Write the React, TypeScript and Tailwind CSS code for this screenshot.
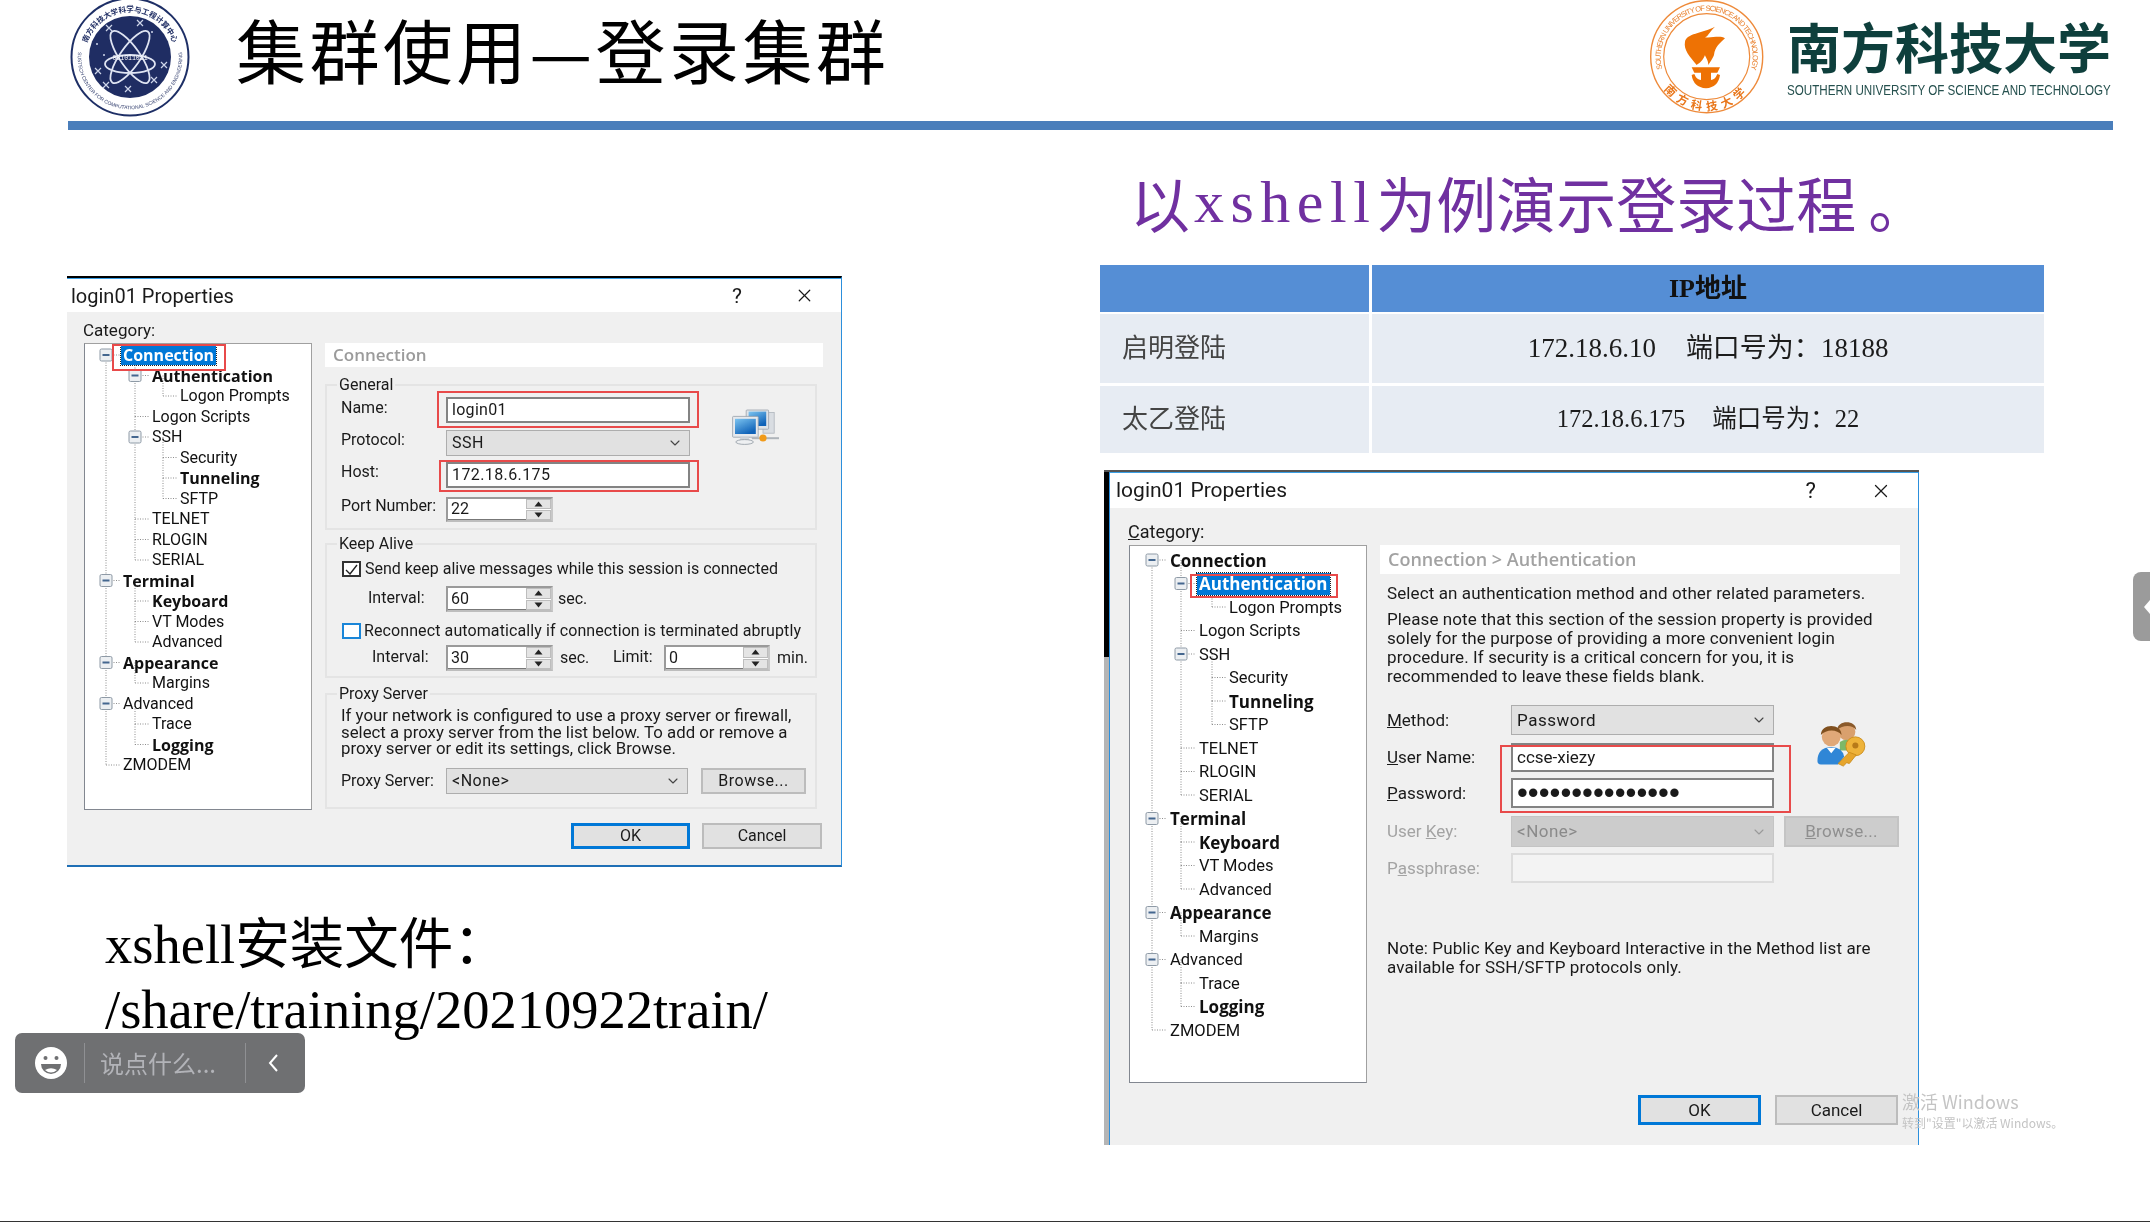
import React from "react";
import { ChevronDown, X } from "lucide-react";

type Node = { t: string; l: number; b?: boolean; e?: boolean };
const NODES: Node[] = [
  { t: "Connection", l: 0, b: true, e: true },
  { t: "Authentication", l: 1, b: true, e: true },
  { t: "Logon Prompts", l: 2 },
  { t: "Logon Scripts", l: 1 },
  { t: "SSH", l: 1, e: true },
  { t: "Security", l: 2 },
  { t: "Tunneling", l: 2, b: true },
  { t: "SFTP", l: 2 },
  { t: "TELNET", l: 1 },
  { t: "RLOGIN", l: 1 },
  { t: "SERIAL", l: 1 },
  { t: "Terminal", l: 0, b: true, e: true },
  { t: "Keyboard", l: 1, b: true },
  { t: "VT Modes", l: 1 },
  { t: "Advanced", l: 1 },
  { t: "Appearance", l: 0, b: true, e: true },
  { t: "Margins", l: 1 },
  { t: "Advanced", l: 0, e: true },
  { t: "Trace", l: 1 },
  { t: "Logging", l: 1, b: true },
  { t: "ZMODEM", l: 0 },
];

type TreeMetrics = { xs: number[]; text: number[]; row: number; top: number };

function Tree({
  m,
  selected,
  selClass,
  redClass,
  boxClass,
  boldClass,
}: {
  m: TreeMetrics;
  selected: number;
  selClass: string;
  redClass: string;
  boxClass: string;
  boldClass: string;
}) {
  const cy = (i: number) => m.top + m.row * i + m.row / 2;
  const segs: { x1: number; y1: number; x2: number; y2: number }[] = [];
  NODES.forEach((n, i) => {
    const y = cy(i);
    const gx = m.xs[n.l];
    segs.push({ x1: gx, y1: y, x2: m.text[n.l] - 3, y2: y });
    if (i > 0) {
      let j = i - 1;
      while (j >= 0 && NODES[j].l > n.l) j--;
      if (j >= 0) segs.push({ x1: gx, y1: cy(j), x2: gx, y2: y });
    }
  });
  return (
    <div className={`relative bg-white border border-[#a0a0a0] border-l-[#828790] border-b-[#828790] ${boxClass}`}>
      <svg className="absolute inset-0 w-full h-full">
        {segs.map((s, i) => (
          <line key={i} {...s} stroke="#8d8d8d" strokeWidth="1" strokeDasharray="1 1.5" />
        ))}
        {NODES.map((n, i) =>
          n.e ? (
            <g key={i} transform={`translate(${m.xs[n.l] - 6.5},${cy(i) - 6.5})`}>
              <rect x="0.5" y="0.5" width="12" height="12" rx="1.5" fill="#eceff2" stroke="#8e9aa6" />
              <rect x="3" y="5.5" width="7" height="2" fill="#44678f" />
            </g>
          ) : null
        )}
      </svg>
      <div className="relative" style={{ paddingTop: m.top }}>
        {NODES.map((n, i) => {
          const sel = i === selected;
          return (
            <div
              key={i}
              className={`flex items-center whitespace-nowrap text-[#111] ${n.b ? boldClass : ""}`}
              style={{ height: m.row, paddingLeft: m.text[n.l] }}
            >
              {sel ? (
                <span className={`relative -ml-[2px] flex items-center px-[2px] bg-[#0078d7] text-white outline-1 outline-dotted outline-[#222] ${selClass}`}>
                  {n.t}
                  <span className={`absolute border-2 border-[#e84a4a] ${redClass}`} />
                </span>
              ) : (
                n.t
              )}
            </div>
          );
        })}
      </div>
    </div>
  );
}

const Chevron = ({ dim }: { dim?: boolean }) => (
  <ChevronDown size={16} strokeWidth={1.6} className={dim ? "text-[#999]" : "text-[#444]"} />
);

const Input = ({ className = "", children }: { className?: string; children?: React.ReactNode }) => (
  <div className={`flex items-center bg-white border-2 border-[#838383] pl-[4px] overflow-hidden ${className}`}>{children}</div>
);

const Combo = ({ className = "", children, dim }: { className?: string; children: React.ReactNode; dim?: boolean }) => (
  <div
    className={`flex items-center justify-between border pl-[5px] pr-[6px] ${
      dim ? "bg-[#cccccc] border-[#c4c4c4] text-[#8a8a8a]" : "bg-[#e1e1e1] border-[#adadad]"
    } ${className}`}
  >
    <span className="tracking-[0.5px]">{children}</span>
    <Chevron dim={dim} />
  </div>
);

const Spin = ({ className = "", value }: { className?: string; value: string }) => (
  <div className={`flex border-2 border-[#9a9a9a] border-r-[#c8c8c8] border-b-[#bdbdbd] bg-white ${className}`}>
    <div className="flex-1 flex items-center pl-[3px] border-b border-[#777]">{value}</div>
    <div className="w-[25px] flex flex-col gap-[1px] bg-white">
      {[0, 1].map((i) => (
        <div key={i} className="flex-1 flex items-center justify-center bg-[#e4e4e4] border border-[#bdbdbd]">
          <svg width="9" height="6" viewBox="0 0 9 6">
            <path d={i === 0 ? "M4.5 0.5 L8.5 5.5 H0.5 Z" : "M4.5 5.5 L8.5 0.5 H0.5 Z"} fill="#222" />
          </svg>
        </div>
      ))}
    </div>
  </div>
);

const Btn = ({ className = "", children, primary }: { className?: string; children: React.ReactNode; primary?: boolean }) => (
  <div
    className={`flex items-center justify-center bg-[#e1e1e1] ${
      primary ? "border-[3px] border-[#0078d7]" : "border-2 border-[#bcbcbc]"
    } ${className}`}
  >
    {children}
  </div>
);

const Group = ({ title, className = "", children }: { title: string; className?: string; children: React.ReactNode }) => (
  <div className={`relative border-2 border-[#e4e4e4] ${className}`}>
    <span className="absolute left-[10px] -top-[11px] bg-[#f0f0f0] px-[2px] leading-[20px]">{title}</span>
    {children}
  </div>
);

const NetIcon = () => (
  <svg width="48" height="42" viewBox="0 0 60 50" className="shrink-0">
    <defs>
      <linearGradient id="mon" x1="0" y1="0" x2="0.6" y2="1">
        <stop offset="0" stopColor="#7cc4f0" />
        <stop offset="1" stopColor="#0f62b8" />
      </linearGradient>
    </defs>
    <rect x="40" y="8" width="14" height="26" fill="#d9dde2" stroke="#b0b6bd" />
    <rect x="19" y="5" width="28" height="24" rx="1" fill="#dfe3e8" stroke="#9aa2ab" />
    <rect x="22" y="7" width="22" height="18" fill="url(#mon)" />
    <rect x="2" y="13" width="32" height="26" rx="1" fill="#e6e9ed" stroke="#97a0aa" />
    <rect x="5" y="16" width="26" height="19" fill="url(#mon)" />
    <path d="M12 39 h10 l2 6 h-14 z" fill="#cfd4da" />
    <ellipse cx="17" cy="45" rx="11" ry="3" fill="#eef0f2" stroke="#8f98a1" />
    <rect x="26" y="39" width="34" height="2.5" fill="#aeb4ba" />
    <circle cx="40" cy="40" r="4.5" fill="#f19b1a" />
  </svg>
);

const UserKeyIcon = () => (
  <svg width="56" height="52" viewBox="0 0 65 60" className="shrink-0">
    <circle cx="38" cy="18" r="10" fill="#d9a06d" />
    <path d="M27 16 C27 4 49 4 49 16 C45 10 33 10 27 16 Z" fill="#8a5a2b" />
    <path d="M30 30 Q38 25 46 30 L46 40 L30 40 Z" fill="#7cb868" />
    <circle cx="20" cy="24" r="11" fill="#e0a878" />
    <path d="M8 22 C8 8 32 8 32 22 C27 15 14 15 8 22 Z" fill="#80501f" />
    <path d="M4 52 Q4 36 20 36 Q33 36 35 47 L28 56 L8 56 Q4 56 4 52 Z" fill="#2f86d6" />
    <path d="M15 37 L20 43 L25 37 Z" fill="#ffffff" />
    <circle cx="48" cy="35" r="11" fill="#eeb33a" stroke="#c98a19" />
    <circle cx="48" cy="34" r="3.5" fill="#b77a19" />
    <path d="M41 42 L28 55 L34 58 L38 54 L41 55 L49 45 Z" fill="#e6a52c" stroke="#c98a19" />
  </svg>
);

const Dialog1 = () => (
  <div className="w-[775px] h-[591px] border-t-2 border-t-black border-r border-r-[#2c8fdc] border-b-2 border-b-[#1f6fb5] bg-[#f0f0f0] text-[#1a1a1a] font-['Roboto','Noto_Sans',sans-serif] text-[16px] leading-[20px]">
    <div className="h-[34px] flex items-center bg-white border-t border-[#3aa0e6] pl-[4px] pr-[26px] text-[20px]">
      <span>login01 Properties</span>
      <span className="ml-auto text-[21px] mr-[52px]">?</span>
      <X size={21} strokeWidth={1.4} />
    </div>
    <div className="pl-[17px]">
      <div className="h-[31px] flex items-end pb-[3px] -ml-[1px] text-[17px]">Category:</div>
      <div className="flex gap-[13px]">
        <Tree
          m={{ xs: [21, 50, 78], text: [38, 67, 95], row: 20.5, top: 0.75 }}
          selected={0}
          selClass="h-[19px]"
          redClass="-left-[9px] -right-[10px] -top-[2px] -bottom-[6px]"
          boxClass="w-[228px] h-[467px] shrink-0"
          boldClass="font-['Open_Sans',sans-serif] font-bold text-[16px]"
        />
        <div className="w-[498px]">
          <div className="h-[24px] bg-white flex items-center pl-[8px] text-[#9b9b9b] font-['Open_Sans',sans-serif] font-semibold text-[17px]">Connection</div>
          <Group title="General" className="mt-[17px] w-[492px] h-[146px]">
            <div className="flex">
              <div className="pt-[11px] pl-[14px]">
                <div className="relative flex items-center h-[26px]">
                  <span className="w-[105px] -mt-[4px]">Name:</span>
                  <Input className="w-[244px] h-[26px] tracking-[0.3px]">login01</Input>
                  <span className="absolute left-[96px] -right-[9px] -top-[6px] -bottom-[5px] border-2 border-[#e84a4a]" />
                </div>
                <div className="flex items-center mt-[7px] h-[26px]">
                  <span className="w-[105px] -mt-[6px]">Protocol:</span>
                  <Combo className="w-[244px] h-[26px]">SSH</Combo>
                </div>
                <div className="relative flex items-center mt-[6px] h-[26px]">
                  <span className="w-[105px] -mt-[6px]">Host:</span>
                  <Input className="w-[244px] h-[26px] tracking-[0.4px]">172.18.6.175</Input>
                  <span className="absolute left-[98px] -right-[9px] -top-[2px] -bottom-[4px] border-2 border-[#e84a4a]" />
                </div>
                <div className="flex items-center mt-[9px] h-[25px]">
                  <span className="w-[105px] -mt-[7px] whitespace-nowrap">Port Number:</span>
                  <Spin className="w-[107px] h-[25px]" value="22" />
                </div>
              </div>
              <div className="ml-[41px] mt-[19px]">
                <NetIcon />
              </div>
            </div>
          </Group>
          <Group title="Keep Alive" className="mt-[13px] w-[492px] h-[135px]">
            <div className="flex items-center mt-[16px] pl-[15px] h-[16px]">
              <span className="w-[19px] h-[16px] flex items-center justify-center border-2 border-[#333] bg-white">
                <svg width="13" height="11" viewBox="0 0 13 11">
                  <path d="M1 6 L5 10 L12 1" fill="none" stroke="#222" strokeWidth="1.4" />
                </svg>
              </span>
              <span className="ml-[4px] whitespace-nowrap">Send keep alive messages while this session is connected</span>
            </div>
            <div className="flex items-center mt-[9px] pl-[41px] h-[26px]">
              <span className="w-[78px] -mt-[2px]">Interval:</span>
              <Spin className="w-[107px] h-[26px]" value="60" />
              <span className="ml-[5px]">sec.</span>
            </div>
            <div className="flex items-center mt-[11px] pl-[15px] h-[16px]">
              <span className="w-[19px] h-[16px] border-2 border-[#1a86d8] bg-white" />
              <span className="ml-[3px] whitespace-nowrap tracking-[0.1px]">Reconnect automatically if connection is terminated abruptly</span>
            </div>
            <div className="flex items-center mt-[6px] pl-[45px] h-[26px]">
              <span className="w-[74px] -mt-[2px]">Interval:</span>
              <Spin className="w-[107px] h-[26px]" value="30" />
              <span className="ml-[7px] w-[53px]">sec.</span>
              <span className="w-[51px] -mt-[2px]">Limit:</span>
              <Spin className="w-[106px] h-[26px]" value="0" />
              <span className="ml-[7px]">min.</span>
            </div>
          </Group>
          <Group title="Proxy Server" className="mt-[15px] w-[492px] h-[116px]">
            <p className="pt-[12px] pl-[14px] text-[16.8px] leading-[16.7px] whitespace-nowrap">
              If your network is configured to use a proxy server or firewall,
              <br />
              select a proxy server from the list below. To add or remove a
              <br />
              proxy server or edit its settings, click Browse.
            </p>
            <div className="flex items-center mt-[11px] pl-[14px]">
              <span className="w-[105px] whitespace-nowrap">Proxy Server:</span>
              <Combo className="w-[242px] h-[26px]">{"<None>"}</Combo>
              <Btn className="ml-[13px] w-[105px] h-[26px] tracking-[0.5px]">Browse...</Btn>
            </div>
          </Group>
          <div className="flex gap-[12px] mt-[14px] ml-[246px]">
            <Btn primary className="w-[119px] h-[26px]">OK</Btn>
            <Btn className="w-[120px] h-[26px]">Cancel</Btn>
          </div>
        </div>
      </div>
    </div>
  </div>
);

const Dim = ({ children }: { children: React.ReactNode }) => <span className="w-[124px] text-[#a3a3a3]">{children}</span>;

const Dialog2 = () => (
  <div className="flex w-[815px] h-[675px] border-t-2 border-t-[#555]">
    <div className="w-[5px] shrink-0 flex flex-col">
      <div className="h-[185px] bg-black" />
      <div className="flex-1 bg-[#b5b5b5]" />
    </div>
    <div className="flex-1 border-x border-[#2c8fdc] bg-[#f0f0f0] text-[#1a1a1a] font-['Roboto','Noto_Sans',sans-serif] text-[17px] leading-[19px]">
      <div className="h-[36px] flex items-center bg-white border-t border-[#3aa0e6] pl-[6px] pr-[26px] text-[21px]">
        <span>login01 Properties</span>
        <span className="ml-auto text-[22px] mr-[54px]">?</span>
        <X size={22} strokeWidth={1.4} />
      </div>
      <div className="pl-[19px]">
        <div className="h-[37px] flex items-end pb-[4px] -ml-[1px] text-[18px]">
          <span><u>C</u>ategory:</span>
        </div>
        <div className="flex gap-[13px]">
          <Tree
            m={{ xs: [22, 51, 82], text: [40, 69, 99], row: 23.5, top: 2.25 }}
            selected={1}
            selClass="h-[22px]"
            redClass="-left-[7px] -right-[8px] top-[1px] -bottom-[3px]"
            boxClass="w-[238px] h-[538px] shrink-0 text-[16.5px]"
            boldClass="font-['Open_Sans',sans-serif] font-bold text-[17px]"
          />
          <div className="w-[520px]">
            <div className="h-[29px] bg-white flex items-center pl-[8px] text-[#a2a2a2] font-['Open_Sans',sans-serif] font-semibold text-[18px]">Connection &gt; Authentication</div>
            <div className="pl-[7px]">
              <p className="mt-[10px] whitespace-nowrap tracking-[0.1px]">Select an authentication method and other related parameters.</p>
              <p className="mt-[7px] whitespace-nowrap tracking-[0.1px]">
                Please note that this section of the session property is provided
                <br />
                solely for the purpose of providing a more convenient login
                <br />
                procedure. If security is a critical concern for you, it is
                <br />
                recommended to leave these fields blank.
              </p>
              <div className="flex mt-[19px]">
                <div>
                  <div className="flex items-center h-[30px]">
                    <span className="w-[124px]"><u>M</u>ethod:</span>
                    <Combo className="w-[263px] h-[30px]">Password</Combo>
                  </div>
                  <div className="relative flex items-center h-[29px] mt-[8px]">
                    <span className="w-[124px]"><u>U</u>ser Name:</span>
                    <Input className="w-[263px] h-[29px]">ccse-xiezy</Input>
                    <span className="absolute left-[113px] -right-[17px] top-[2px] h-[68px] border-2 border-[#e84a4a]" />
                  </div>
                  <div className="flex items-center h-[30px] mt-[6px]">
                    <span className="w-[124px]"><u>P</u>assword:</span>
                    <Input className="w-[263px] h-[30px] font-['Liberation_Sans'] text-[31px] leading-none">
                      <span className="-mt-[1px]">•••••••••••••••</span>
                    </Input>
                  </div>
                </div>
                <div className="ml-[40px] mt-[11px]">
                  <UserKeyIcon />
                </div>
              </div>
              <div className="flex items-center mt-[8px] h-[31px]">
                <Dim>User <u>K</u>ey:</Dim>
                <Combo dim className="w-[263px] h-[31px]">{"<None>"}</Combo>
                <Btn className="ml-[10px] w-[115px] h-[31px] !bg-[#cdcdcd] !border-[#c4c4c4] text-[#8f8f8f] tracking-[0.3px]"><span><u>B</u>rowse...</span></Btn>
              </div>
              <div className="flex items-center mt-[6px] h-[30px]">
                <Dim>P<u>a</u>ssphrase:</Dim>
                <div className="w-[263px] h-[30px] border-2 border-[#dcdcdc] bg-[#f3f3f3]" />
              </div>
              <p className="mt-[56px] whitespace-nowrap tracking-[0.1px]">
                Note: Public Key and Keyboard Interactive in the Method list are
                <br />
                available for SSH/SFTP protocols only.
              </p>
            </div>
            <div className="flex gap-[14px] mt-[118px] ml-[258px]">
              <Btn primary className="w-[123px] h-[30px]">OK</Btn>
              <Btn className="w-[123px] h-[30px]">Cancel</Btn>
            </div>
          </div>
        </div>
      </div>
    </div>
  </div>
);

const CSELogo = () => (
  <svg width="120" height="120" viewBox="0 0 120 120" className="shrink-0">
    <defs>
      <path id="cseTop" d="M17.7 73.4 A45 45 0 1 1 102.3 73.4" />
      <path id="cseBot" d="M8.3 50 A52.3 52.3 0 1 0 111.7 50" />
    </defs>
    <circle cx="60" cy="58" r="58.5" fill="#fff" stroke="#1e2f66" strokeWidth="2" />
    <circle cx="60" cy="58" r="41" fill="#1f2d63" />
    <text fontSize="7.5" fontWeight="700" fill="#1f2d63" fontFamily="'Noto Sans CJK SC',sans-serif" textAnchor="middle">
      <textPath href="#cseTop" startOffset="50%">南方科技大学科学与工程计算中心</textPath>
    </text>
    <text fontSize="5" fill="#34406f" fontFamily="'Liberation Sans',sans-serif" textAnchor="middle">
      <textPath href="#cseBot" startOffset="50%">SUSTECH CENTER FOR COMPUTATIONAL SCIENCE AND ENGINEERING</textPath>
    </text>
    <g fill="none" stroke="#dfe4f2" strokeWidth="1.8" transform="translate(60,58)">
      <ellipse rx="31" ry="10" transform="rotate(55)" />
      <ellipse rx="31" ry="10" transform="rotate(-55)" />
      <ellipse rx="25" ry="9" transform="translate(0,7)" />
    </g>
    <text x="60" y="60.5" fontSize="6.5" fill="#fff" fontFamily="'Liberation Mono',monospace" textAnchor="middle">001011011</text>
    <g stroke="#cfd6ea" strokeWidth="1.2">
      {[[39, 29], [70, 24], [28, 72], [84, 81], [58, 90], [94, 66], [36, 86]].map(([x, y], i) => (
        <path key={i} d={`M${x - 3} ${y - 3} L${x + 3} ${y + 3} M${x + 3} ${y - 3} L${x - 3} ${y + 3}`} />
      ))}
    </g>
    <g fill="#cfd6ea">
      <circle cx="27" cy="45" r="1" />
      <circle cx="82" cy="33" r="1" />
      <circle cx="34" cy="56" r="1" />
    </g>
  </svg>
);

const SustechLogo = () => (
  <svg width="135" height="120" viewBox="0 0 135 120" className="shrink-0">
    <defs>
      <path id="susTop" d="M31.5 86.3 A46 46 0 1 1 101.9 86.3" />
      <path id="susBot" d="M13 56.7 A53.7 53.7 0 0 0 120.4 56.7" />
    </defs>
    <circle cx="66.7" cy="56.7" r="56" fill="#fff" stroke="#ee8a3a" strokeWidth="1.4" />
    <circle cx="66.7" cy="56.7" r="43" fill="none" stroke="#ee8a3a" strokeWidth="1.2" />
    <text fontSize="7.5" fill="#e9802d" fontFamily="'Liberation Sans',sans-serif" textAnchor="middle" letterSpacing="-0.9">
      <textPath href="#susTop" startOffset="50%">SOUTHERN UNIVERSITY OF SCIENCE AND TECHNOLOGY</textPath>
    </text>
    <text fontSize="11.5" fontWeight="700" fill="#e9761a" fontFamily="'Noto Sans CJK SC',sans-serif" textAnchor="middle" letterSpacing="5">
      <textPath href="#susBot" startOffset="50%">南方科技大学</textPath>
    </text>
    <g transform="scale(0.3333)" fill="#ee7204">
      <path d="M170 195 C150 170 130 150 135 125 C140 100 185 100 225 80 C205 100 205 108 195 112 C215 115 240 105 255 115 C240 130 225 140 222 165 C218 175 215 180 205 195 C205 180 195 170 195 165 C190 180 180 188 170 195 Z" />
      <path d="M155 202 L240 202 L232 218 L213 218 L213 240 Q225 240 232 222 L240 225 Q235 262 198 265 Q160 262 155 225 L163 222 Q170 240 183 240 L183 218 L163 218 Z" />
    </g>
  </svg>
);

const Face = () => (
  <svg width="32" height="32" viewBox="0 0 32 32" className="shrink-0">
    <circle cx="16" cy="16" r="16" fill="#fff" />
    <circle cx="10.5" cy="11" r="2" fill="#6f7072" />
    <circle cx="21.5" cy="11" r="2" fill="#6f7072" />
    <path d="M6 17 H26 A10 10 0 0 1 6 17 Z" fill="#6f7072" />
    <path d="M10 23 Q16 19.5 22 23 Q16 28 10 23 Z" fill="#fff" />
  </svg>
);

export default function App() {
  return (
    <div className="relative w-[2150px] h-[1222px] flex flex-col bg-white overflow-hidden border-b border-[#333] blur-[0.5px]">
      <header className="flex items-start h-[121px] shrink-0 pl-[70px] pr-[39px]">
        <div className="-mt-[1px]">
          <CSELogo />
        </div>
        <h1 className="ml-[46px] mt-[7px] text-[70px] leading-[84px] tracking-[3.4px] whitespace-nowrap text-black font-['Noto_Sans_CJK_SC',sans-serif]">
          集群使用—登录集群
        </h1>
        <div className="ml-auto flex">
          <SustechLogo />
          <div className="ml-[12px] w-[324px]">
            <div className="mt-[9px] h-[74px] leading-[74px] text-[54px] font-bold text-[#0e3f3c] whitespace-nowrap font-['Noto_Sans_CJK_SC',sans-serif]">
              南方科技大学
            </div>
            <div className="text-[15px] leading-[14px] origin-left scale-x-[0.775] text-[#25504e] whitespace-nowrap font-['Liberation_Sans',sans-serif]">
              SOUTHERN UNIVERSITY OF SCIENCE AND TECHNOLOGY
            </div>
          </div>
        </div>
      </header>
      <div className="ml-[68px] mr-[37px] h-[9px] shrink-0 bg-[#4a7ebb]" />

      <main className="flex flex-1">
        <section className="w-[1100px] shrink-0 pl-[67px] pt-[146px]">
          <Dialog1 />
          <div className="mt-[45px] ml-[38px] text-[54.5px] leading-[65px] text-black whitespace-nowrap font-['Liberation_Serif','Noto_Sans_CJK_SC',serif]">
            xshell安装文件：
            <br />
            /share/training/20210922train/
          </div>
        </section>

        <section className="w-[944px] shrink-0">
          <h2 className="mt-[42px] ml-[30px] h-[60px] flex items-center text-[60px] leading-[60px] text-[#7030a0] whitespace-nowrap font-['Noto_Sans_CJK_SC',sans-serif]">
            以<span className="ml-[4px] tracking-[6.5px] font-['Liberation_Serif',serif]">xshell</span>为例演示登录过程<span className="ml-[12px]">。</span>
          </h2>
          <div className="mt-[33px] grid grid-cols-[269px_672px] gap-x-[3px] font-['Liberation_Serif','Noto_Sans_CJK_SC',serif]">
            <div className="h-[47px] bg-[#558ed5]" />
            <div className="h-[47px] bg-[#558ed5] flex items-center justify-center text-[26px] font-bold text-[#111]">IP地址</div>
            <div className="mt-[2px] h-[69px] bg-[#e7ecf3] flex items-center pl-[22px] text-[26px] text-[#444]">启明登陆</div>
            <div className="mt-[2px] h-[69px] bg-[#e7ecf3] flex items-center justify-center text-[27px] text-[#1c1c1c]">
              172.18.6.10<span className="ml-[30px]">端口号为：</span>18188
            </div>
            <div className="mt-[3px] h-[67px] bg-[#e7ecf3] flex items-center pl-[22px] text-[26px] text-[#444]">太乙登陆</div>
            <div className="mt-[3px] h-[67px] bg-[#e7ecf3] flex items-center justify-center text-[24.5px] text-[#1c1c1c]">
              172.18.6.175<span className="ml-[27px]">端口号为：</span>22
            </div>
          </div>
          <div className="mt-[17px] ml-[4px]">
            <Dialog2 />
          </div>
        </section>
      </main>

      {/* Overlays */}
      <div className="absolute left-[15px] top-[1033px] w-[290px] h-[60px] rounded-[7px] bg-[#6f7072] flex items-center pl-[20px]">
        <Face />
        <span className="ml-[17px] w-px h-[40px] bg-[#8f9093]" />
        <span className="ml-[15px] w-[145px] text-[24px] leading-[30px] text-[#b2b3b8] whitespace-nowrap font-['Noto_Sans_CJK_SC',sans-serif]">说点什么...</span>
        <span className="w-px h-[40px] bg-[#8f9093]" />
        <svg width="12" height="18" viewBox="0 0 12 18" className="ml-[21px]">
          <path d="M10 1 L3 9 L10 17" fill="none" stroke="#fff" strokeWidth="2" />
        </svg>
      </div>

      <div className="absolute left-[1902px] top-[1087px] whitespace-nowrap text-[#c4c4c4] font-['Noto_Sans_CJK_SC',sans-serif]">
        <div className="text-[18px] leading-[28px]">激活 Windows</div>
        <div className="text-[12px] leading-[20px] -mt-[2px]">转到"设置"以激活 Windows。</div>
      </div>

      <div className="absolute right-0 top-[572px] w-[17px] h-[69px] rounded-l-[8px] bg-[#9b9b9b] flex items-center justify-end">
        <span className="w-0 h-0 border-y-[7px] border-y-transparent border-r-[6px] border-r-white" />
      </div>
    </div>
  );
}
